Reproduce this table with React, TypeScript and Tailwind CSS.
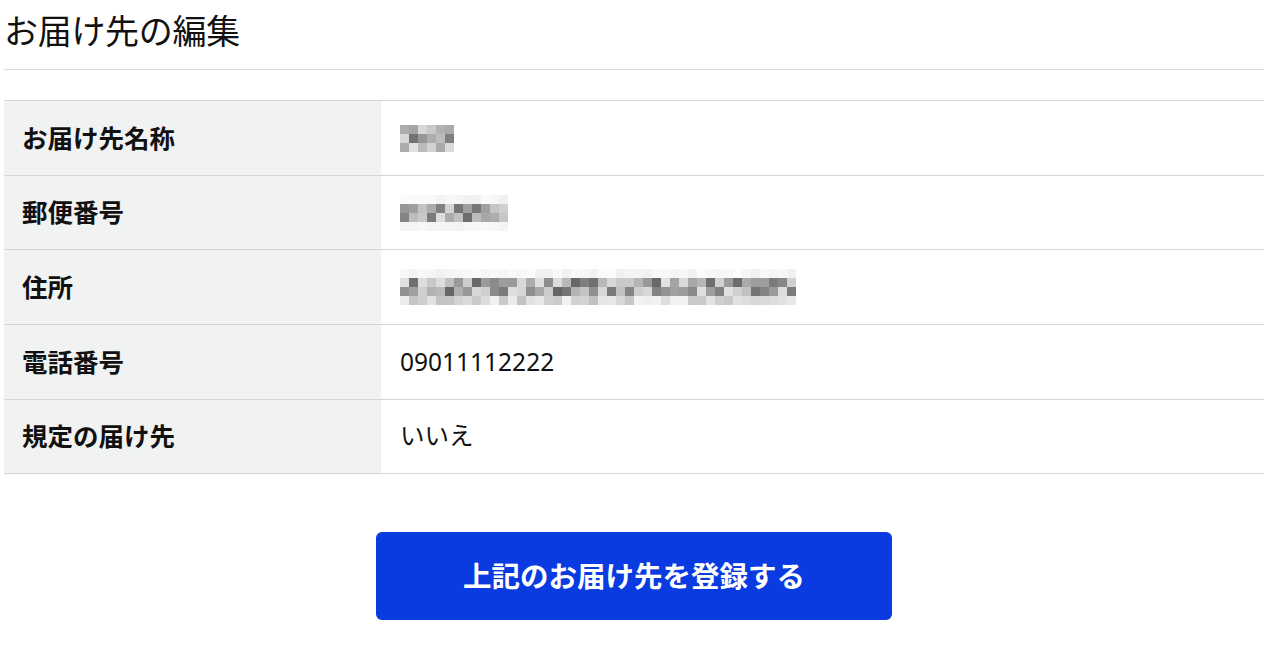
const seeded = (seed: number) => {
  let s = seed;
  return () => {
    s = (s * 9301 + 49297) % 233280;
    return s / 233280;
  };
};

// blurred values in the screenshot are a pixel mosaic, so they are drawn as one
const Mosaic = ({ cols, rows, seed }: { cols: number; rows: number[]; seed: number }) => {
  const rand = seeded(seed);
  return (
    <div className="flex flex-col">
      {rows.map((depth, r) => (
        <div key={r} className="flex">
          {Array.from({ length: cols }).map((_, c) => {
            const v = rand();
            const light = Math.round(255 - depth * (30 + v * 125));
            return (
              <div
                key={c}
                className="h-[9px] w-[9px]"
                style={{ backgroundColor: `rgb(${light},${light},${light})` }}
              />
            );
          })}
        </div>
      ))}
    </div>
  );
};

const rows = [
  { label: "お届け先名称", h: 75, value: <Mosaic cols={6} rows={[0.9, 1, 0.75]} seed={7} /> },
  { label: "郵便番号", h: 74, value: <Mosaic cols={12} rows={[0.1, 0.9, 1, 0.08]} seed={21} /> },
  { label: "住所", h: 75, value: <Mosaic cols={44} rows={[0.1, 1, 1, 0.4]} seed={55} /> },
  { label: "電話番号", h: 75, value: "09011112222" },
  { label: "規定の届け先", h: 74, value: "いいえ" },
];

export default function App() {
  return (
    <div
      className="min-h-screen bg-white pl-[4px] pr-[16px] text-[#111]"
      style={{ fontFamily: '"Noto Sans", "Noto Sans CJK JP", sans-serif' }}
    >
      <h1 className="h-[62px] text-[34px] font-normal leading-[62px] tracking-[-0.3px]">お届け先の編集</h1>
      <div className="mt-[7px] border-t border-[#d9d9d9]" />

      <div className="mt-[30px] border-t border-[#d6d6d6]">
        {rows.map((row) => (
          <div key={row.label} className="flex border-b border-[#d6d6d6]" style={{ height: row.h }}>
            <div className="flex w-[377px] items-center bg-[#f1f3f3] pl-[18px] text-[25.5px] font-bold">
              {row.label}
            </div>
            <div className="flex flex-1 items-center pl-[19px] text-[24.5px]">{row.value}</div>
          </div>
        ))}
      </div>

      <div className="mt-[58px] flex justify-center">
        <button className="h-[88px] w-[516px] rounded-[6px] bg-[#0a3be0] text-[28.5px] font-bold text-white">
          上記のお届け先を登録する
        </button>
      </div>
    </div>
  );
}
